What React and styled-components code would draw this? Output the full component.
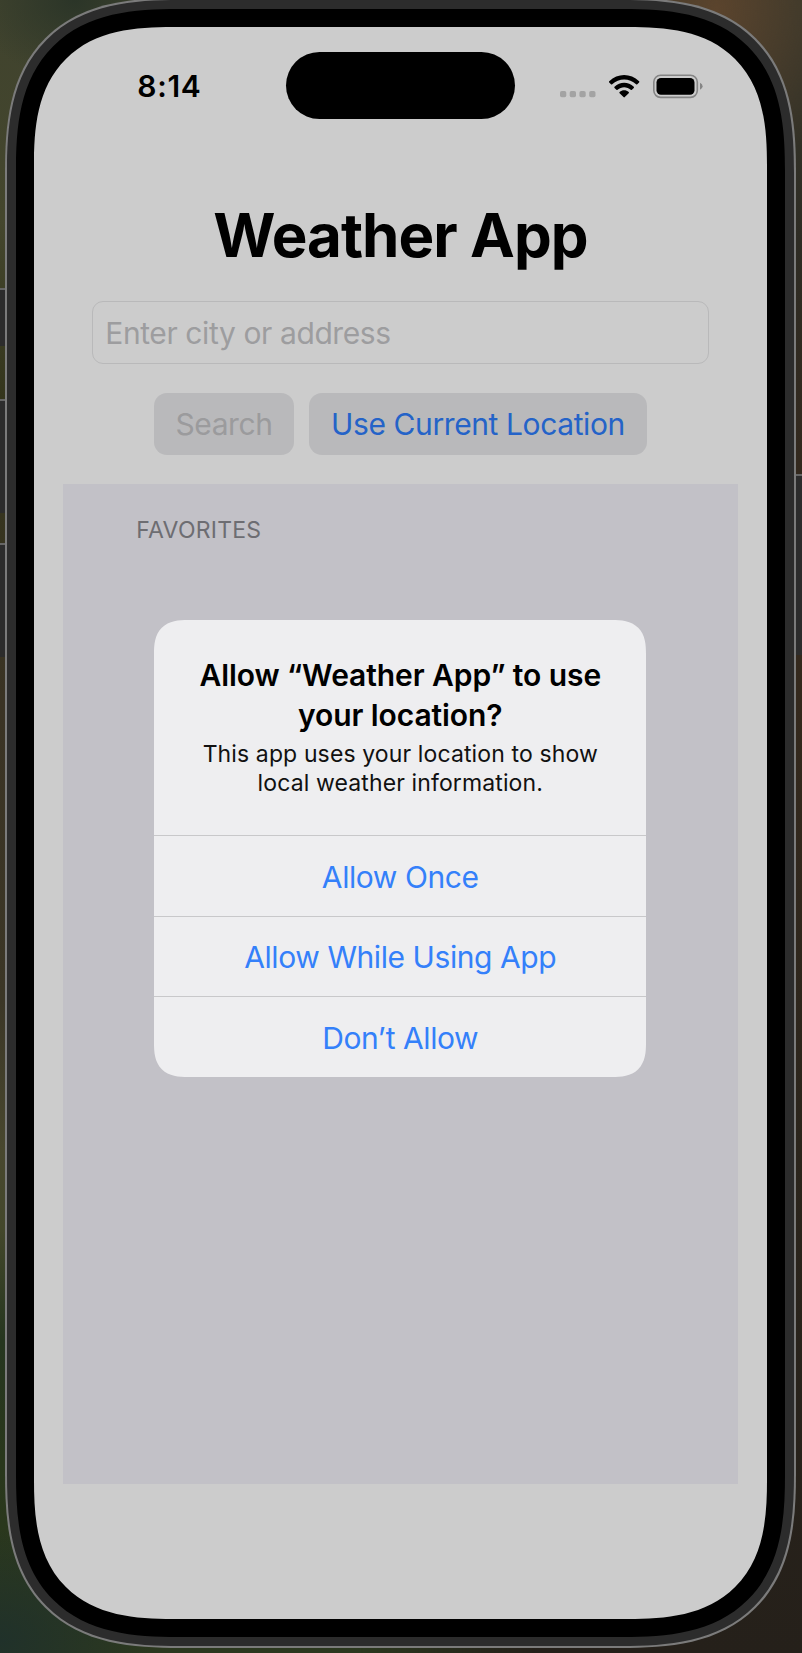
import React from "react";
import styled, { createGlobalStyle, css } from "styled-components";

const GlobalStyle = createGlobalStyle`
  *, *::before, *::after { box-sizing: border-box; }
  html, body { margin: 0; padding: 0; }
  body {
    font-family: Inter, "Liberation Sans", sans-serif;
    color: #000;
    overflow: hidden;
  }
  button, input { font: inherit; margin: 0; }
`;

const squircle = css`
  border-radius: ${(p) => p.$fallback}px;
  @supports (corner-shape: superellipse(1.4)) {
    border-radius: ${(p) => p.$corner}px;
    corner-shape: superellipse(1.41);
  }
`;

const Desktop = styled.div`
  position: relative;
  width: 802px;
  height: 1653px;
  overflow: hidden;
  display: flex;
  justify-content: center;
  background:
    radial-gradient(ellipse 100px 80px at 75px 0, #2b3528 0%, transparent 100%),
    radial-gradient(ellipse 150px 110px at 0 1640px, #20312a 0%, transparent 100%),
    linear-gradient(180deg, #40432e 0, #44462d 220px, #34351c 400px, #3a3324 700px, #3b3626 1000px, #48472e 1150px, #43472b 1230px, #26361f 1340px, #29371c 1460px, #2c381f 1653px);

  &::before {
    content: "";
    position: absolute;
    inset: 0 0 0 45%;
    background:
      radial-gradient(ellipse 130px 180px at 355px 10px, #5b442d 0%, transparent 100%),
      linear-gradient(180deg, #36362a 0, #2e2c24 240px, #33291e 460px, #34291d 700px, #2b251c 1150px, #25201a 1653px);
    mask-image: linear-gradient(90deg, transparent, #000 40%);
  }
`;

const SideKey = styled.div`
  position: absolute;
  top: ${(p) => p.$top}px;
  ${(p) => p.$side}: 0;
  width: 7px;
  height: ${(p) => p.$height}px;
  background: #2c2c2c;
  border-top: 2px solid #666;
`;

const Phone = styled.div`
  position: relative;
  flex: none;
  width: 790.5px;
  height: 1650px;
  margin: -2px 0 0 -1px;
  padding: 2px;
  background: #7b7b7b;
  ${squircle}
`;

const Rim = styled.div`
  height: 100%;
  padding: 9px;
  background: #2c2c2c;
  ${squircle}
`;

const Bezel = styled.div`
  height: 100%;
  padding: 18px;
  background: #000;
  ${squircle}
`;

const Screen = styled.div`
  position: relative;
  height: 100%;
  display: flex;
  flex-direction: column;
  background: #ccc;
  overflow: hidden;
  ${squircle}
`;

const StatusBar = styled.div`
  height: 117px;
  flex: none;
  display: grid;
  grid-template-columns: 252px 229px 1fr;
  align-items: center;
`;

const Time = styled.div`
  padding-left: 103px;
  padding-top: 1px;
  font-size: 30px;
  font-weight: 600;
  letter-spacing: 0.7px;
  line-height: 36px;
`;

const Island = styled.div`
  height: 67px;
  border-radius: 34px;
  background: #000;
`;

const StatusIcons = styled.div`
  display: flex;
  align-items: center;
  padding-left: 45px;
`;

const Content = styled.main`
  flex: 1;
  display: flex;
  flex-direction: column;
  padding: 55px 29px 0;
`;

const Title = styled.h1`
  margin: 0;
  text-align: center;
  font-size: 60px;
  font-weight: 700;
  line-height: 72px;
  letter-spacing: -0.95px;
`;

const Field = styled.input`
  height: 63px;
  margin: 30px 29px 0;
  padding: 0 12px;
  border: 1.5px solid #b9b9ba;
  border-radius: 11px;
  background: transparent;
  font-size: 30px;
  letter-spacing: -0.4px;
  outline: none;
  &::placeholder { color: #9d9d9f; opacity: 1; }
`;

const Actions = styled.div`
  display: flex;
  justify-content: center;
  gap: 15px;
  margin-top: 29px;
`;

const ActionButton = styled.button`
  width: ${(p) => p.$width}px;
  height: 62px;
  padding: 0;
  border: 0;
  border-radius: 13px;
  background: #b9b9bb;
  font-size: 30px;
  letter-spacing: -0.4px;
  white-space: nowrap;
  color: ${(p) => (p.disabled ? "#9b9b9d" : "#2463c8")};
`;

const List = styled.section`
  height: 1000px;
  margin-top: 29px;
  padding: 32px 73px;
  background: #c2c1c7;
`;

const ListHeader = styled.h2`
  margin: 0;
  font-size: 23px;
  font-weight: 400;
  line-height: 28px;
  letter-spacing: 0.25px;
  color: #6d6d72;
`;

const Alert = styled.div`
  position: absolute;
  left: 120px;
  top: 593px;
  width: 492px;
  height: 457px;
  overflow: hidden;
  background: #eeeef0;
  ${squircle}
`;

const AlertText = styled.div`
  height: 215px;
  padding-top: 35px;
  text-align: center;
`;

const AlertTitle = styled.div`
  font-size: 30px;
  font-weight: 600;
  line-height: 40px;
  letter-spacing: -0.08px;
`;

const AlertBody = styled.div`
  margin-top: 5px;
  font-size: 23px;
  line-height: 29px;
  letter-spacing: 0.12px;
  color: #111;
`;

const AlertButton = styled.button`
  display: block;
  width: 100%;
  height: 80.67px;
  padding: 1.5px 0 0;
  border: 0;
  border-top: 1px solid #c8c8ca;
  background: transparent;
  font-size: 30px;
  letter-spacing: -0.42px;
  color: #3480fa;
`;

const StatusGlyphs = () => (
  <svg width="146" height="30" viewBox="0 0 146 30">
    <g fill="#a3a3a3">
      {[0, 9.7, 19.4, 29.2].map((x) => (
        <rect key={x} x={x} y="20" width="6.3" height="6.3" rx="1.8" />
      ))}
    </g>
    <g transform="translate(49 4)">
      <path d="M0.2 6.2C8.6-2 21.700-2 30.100 6.200Q30.700 6.800 30.100 7.400L28.300 9.200Q27.700 9.700 27.100 9.200C20.500 2.900 9.800 2.900 3.200 9.200Q2.600 9.700 2 9.200L0.200 7.400Q-0.400 6.800 0.200 6.200Z" />
      <path d="M5.500 11.700C11 6.500 19.300 6.500 24.800 11.700Q25.300 12.300 24.800 12.900L22.900 14.700Q22.300 15.200 21.700 14.700C18 11.300 12.300 11.300 8.600 14.700Q8 15.200 7.400 14.700L5.500 12.900Q5 12.300 5.500 11.700Z" />
      <path d="M10.600 17C13.200 14.800 17.100 14.800 19.700 17Q20.300 17.600 19.700 18.200L15.800 22.100Q15.150 22.700 14.500 22.100L10.600 18.200Q10 17.600 10.600 17Z" />
    </g>
    <rect x="93.800" y="4.200" width="43.500" height="22.200" rx="6.800" fill="none" stroke="#858585" strokeWidth="1.600" />
    <rect x="96.500" y="7" width="38" height="16.700" rx="4.500" />
    <path d="M140 11.800Q142.600 12.900 142.600 15.200Q142.600 17.600 140 18.700Z" fill="#858585" />
  </svg>
);

export default function App() {
  return (
    <>
      <GlobalStyle />
      <Desktop>
        <SideKey $side="left" $top={288} $height={58} />
        <SideKey $side="left" $top={399} $height={114} />
        <SideKey $side="left" $top={543} $height={114} />
        <SideKey $side="right" $top={474} $height={181} />
        <Phone $fallback={136} $corner={175}>
          <Rim $fallback={134} $corner={173}>
            <Bezel $fallback={126} $corner={162}>
              <Screen $fallback={112} $corner={139}>
                <StatusBar>
                  <Time>8:14</Time>
                  <Island />
                  <StatusIcons>
                    <StatusGlyphs />
                  </StatusIcons>
                </StatusBar>
                <Content>
                  <Title>Weather App</Title>
                  <Field placeholder="Enter city or address" />
                  <Actions>
                    <ActionButton $width={140} disabled>Search</ActionButton>
                    <ActionButton $width={338}>Use Current Location</ActionButton>
                  </Actions>
                  <List>
                    <ListHeader>FAVORITES</ListHeader>
                  </List>
                </Content>
                <Alert role="alertdialog" $fallback={27} $corner={34}>
                  <AlertText>
                    <AlertTitle>
                      Allow “Weather App” to use
                      <br />
                      your location?
                    </AlertTitle>
                    <AlertBody>
                      This app uses your location to show
                      <br />
                      local weather information.
                    </AlertBody>
                  </AlertText>
                  <AlertButton>Allow Once</AlertButton>
                  <AlertButton>Allow While Using App</AlertButton>
                  <AlertButton>Don’t Allow</AlertButton>
                </Alert>
              </Screen>
            </Bezel>
          </Rim>
        </Phone>
      </Desktop>
    </>
  );
}
